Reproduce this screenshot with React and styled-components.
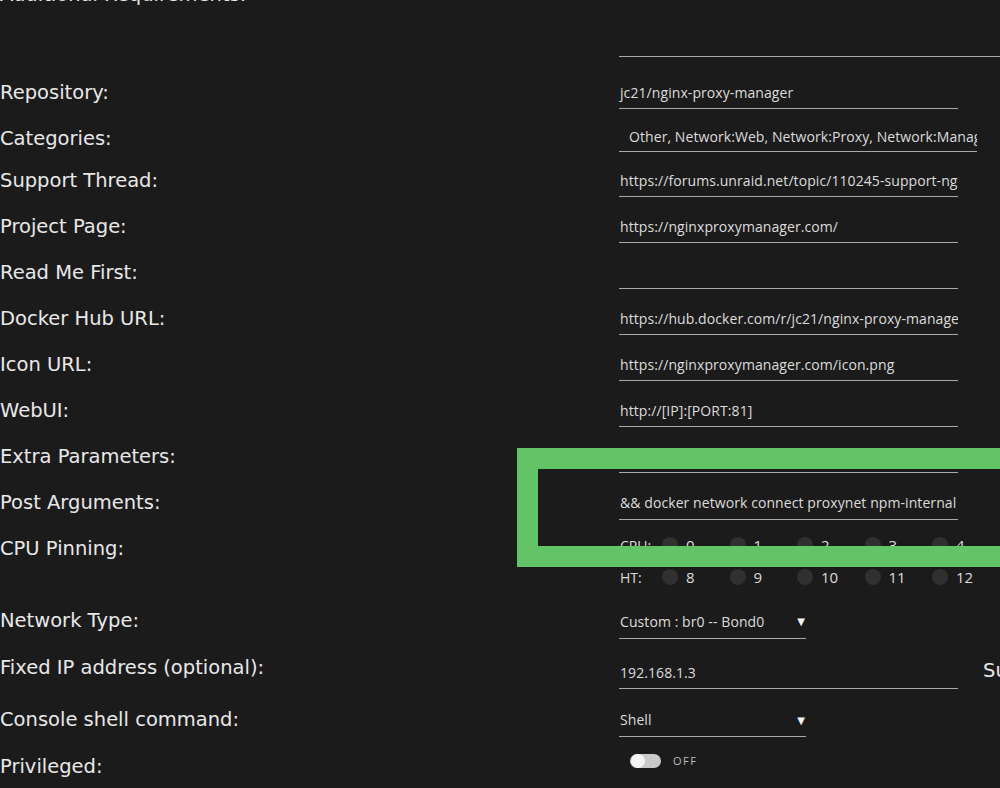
import React from "react";
import styled, { createGlobalStyle } from "styled-components";

const Global = createGlobalStyle`
  html, body {
    margin: 0;
    padding: 0;
    background: #1c1b1c;
    overflow: hidden;
  }
  body {
    font-family: "Open Sans", "DejaVu Sans", sans-serif;
  }
`;

const Screen = styled.div`
  position: relative;
  width: 1000px;
  height: 788px;
  overflow: hidden;
  background: #1c1b1c;
`;

const Form = styled.div`
  margin-top: -22px;
  display: flex;
  flex-direction: column;
`;

const Row = styled.div`
  display: grid;
  grid-template-columns: 619px 1fr;
  align-items: start;
  height: ${(p) => p.$h || 46}px;
`;

const Label = styled.div`
  font-family: "DejaVu Sans", "Open Sans", sans-serif;
  font-size: 19.5px;
  line-height: 33px;
  color: #e8e8e8;
  white-space: nowrap;
`;

const Value = styled.div`
  display: flex;
  align-items: flex-start;
  white-space: nowrap;
`;

const Field = styled.div`
  box-sizing: border-box;
  width: ${(p) => p.$w || 339}px;
  height: ${(p) => p.$h || 33}px;
  padding: ${(p) => p.$pt || 0}px 0 0 ${(p) => p.$pl || 1}px;
  border-bottom: 1px solid #a9a9a9;
  font-size: 14px;
  letter-spacing: 0.08px;
  color: #dcdcdc;
  display: flex;
  align-items: center;
  overflow: hidden;
  white-space: nowrap;
  flex-shrink: 0;
`;

const Select = styled(Field)`
  justify-content: space-between;
  padding-right: 0;
`;

const Arrow = styled.span`
  font-size: 10px;
  color: #f2f2f2;
  margin-right: 1px;
`;

const SideLabel = styled(Label)`
  margin-left: 25px;
  line-height: 40px;
`;

const CpuGrid = styled.div`
  display: grid;
  grid-template-columns: 42px repeat(8, 67.5px);
  grid-auto-rows: 32px;
  margin-top: -3px;
  margin-left: 1px;
  font-size: 14px;
  color: #dcdcdc;
  align-items: center;
  white-space: nowrap;
`;

const Cell = styled.div`
  display: flex;
  align-items: center;
  gap: 8px;
  font-size: 15px;
`;

const Dot = styled.span`
  width: 16px;
  height: 16px;
  border-radius: 50%;
  background: #303030;
  flex-shrink: 0;
`;

const ToggleWrap = styled.div`
  display: flex;
  align-items: center;
  gap: 12px;
  margin: 3px 0 0 11px;
`;

const Track = styled.span`
  position: relative;
  width: 31px;
  height: 14px;
  border-radius: 7px;
  background: #c9c9c9;
`;

const Knob = styled.span`
  position: absolute;
  left: 1px;
  top: 0;
  width: 14px;
  height: 14px;
  border-radius: 50%;
  background: #f4f4f4;
`;

const ToggleText = styled.span`
  font-size: 11px;
  letter-spacing: 1.5px;
  color: #bdbdbd;
`;

const Highlight = styled.div`
  position: absolute;
  left: 517px;
  top: 448px;
  width: 560px;
  height: 119px;
  box-sizing: border-box;
  border: 21px solid #62c466;
  pointer-events: none;
`;

const textRows = [
  { label: "Repository:", value: "jc21/nginx-proxy-manager", h: 46 },
  {
    label: "Categories:",
    value: "Other, Network:Web, Network:Proxy, Network:Management, Tools:",
    h: 42,
    w: 358,
    pl: 10,
    fh: 30,
  },
  {
    label: "Support Thread:",
    value:
      "https://forums.unraid.net/topic/110245-support-nginx-proxy-manager-npm-official/",
  },
  { label: "Project Page:", value: "https://nginxproxymanager.com/" },
  { label: "Read Me First:", value: "" },
  {
    label: "Docker Hub URL:",
    value: "https://hub.docker.com/r/jc21/nginx-proxy-manager/",
  },
  { label: "Icon URL:", value: "https://nginxproxymanager.com/icon.png" },
  { label: "WebUI:", value: "http://[IP]:[PORT:81]" },
  { label: "Extra Parameters:", value: "" },
  {
    label: "Post Arguments:",
    value: "&& docker network connect proxynet npm-internal",
    fh: 34,
  },
];

const cpu = [0, 1, 2, 3, 4, 5, 6, 7];
const ht = [8, 9, 10, 11, 12, 13, 14, 15];

export default function App() {
  return (
    <Screen>
      <Global />
      <Form>
        <Row $h={98}>
          <Label>Additional Requirements:</Label>
          <Value>
            <Field $w={420} $h={79} />
          </Value>
        </Row>
        {textRows.map((r) => (
          <Row key={r.label} $h={r.h}>
            <Label>{r.label}</Label>
            <Value>
              <Field $w={r.w} $h={r.fh} $pl={r.pl}>
                {r.value}
              </Field>
            </Value>
          </Row>
        ))}
        <Row $h={72}>
          <Label>CPU Pinning:</Label>
          <CpuGrid>
            <span>CPU:</span>
            {cpu.map((n) => (
              <Cell key={"c" + n}>
                <Dot />
                {n}
              </Cell>
            ))}
            <span>HT:</span>
            {ht.map((n) => (
              <Cell key={"h" + n}>
                <Dot />
                {n}
              </Cell>
            ))}
          </CpuGrid>
        </Row>
        <Row $h={47}>
          <Label>Network Type:</Label>
          <Value>
            <Select $w={187} $h={35}>
              Custom : br0 -- Bond0
              <Arrow>▼</Arrow>
            </Select>
          </Value>
        </Row>
        <Row $h={52}>
          <Label>Fixed IP address (optional):</Label>
          <Value>
            <Field $h={38} $pt={6}>
              192.168.1.3
            </Field>
            <SideLabel>Subnet:</SideLabel>
          </Value>
        </Row>
        <Row $h={47}>
          <Label>Console shell command:</Label>
          <Value>
            <Select $w={187} $h={34}>
              Shell
              <Arrow>▼</Arrow>
            </Select>
          </Value>
        </Row>
        <Row $h={46}>
          <Label>Privileged:</Label>
          <ToggleWrap>
            <Track>
              <Knob />
            </Track>
            <ToggleText>OFF</ToggleText>
          </ToggleWrap>
        </Row>
      </Form>
      <Highlight />
    </Screen>
  );
}
